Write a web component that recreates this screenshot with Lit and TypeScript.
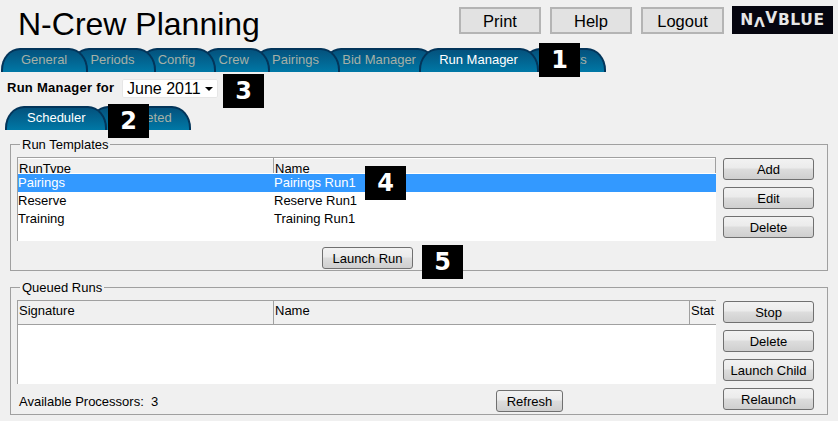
import { LitElement, html, css } from "lit";
import { customElement } from "lit/decorators.js";

const mainTabs = ["General", "Periods", "Config", "Crew", "Pairings", "Bid Manager", "Run Manager", "Reports"];

@customElement("app-root")
export class AppRoot extends LitElement {
  static styles = css`
    :host {
      display: block;
      position: relative;
      width: 838px;
      height: 421px;
      overflow: hidden;
      background: #f0f0f0;
      color: #000;
      font: 13px/16px "Liberation Sans", Arial, sans-serif;
    }
    .top { display: flex; height: 48px; box-sizing: border-box; padding: 6px 5px 0 18px; }
    .title { margin: 0; font-size: 32px; line-height: 36px; font-weight: 400; }
    .actions { margin-left: auto; display: flex; gap: 9px; align-items: flex-start; }
    .hbtn {
      box-sizing: border-box; width: 82px; height: 27px; margin-top: 1px; padding: 0;
      border: 2px solid #b4b4b4; background: #e2e2e2; color: #000;
      font: 16.5px/22px "Liberation Sans", Arial, sans-serif;
    }
    .hbtn.wide { width: 83px; }
    .logo {
      box-sizing: border-box; width: 101px; height: 28px; margin-left: -1px; background: #05050f; color: #e6e6e6;
      display: flex; align-items: center; justify-content: center; letter-spacing: .6px;
      font: 700 15.5px/28px "DejaVu Sans", sans-serif;
    }
    .logo .up { position: relative; top: -2px; }
    .logo .dn { position: relative; top: 2px; font-size: 14px; }
    .tabs { display: flex; height: 24px; padding-left: 1px; }
    .tabs.sub { padding-left: 5px; }
    .tab {
      position: relative;
      box-sizing: border-box; height: 24px; padding: 0 19px 0 18px; margin-right: -17.8px;
      border: 2px solid #03355a; border-bottom: 0; border-radius: 19px 19px 0 0 / 22px 22px 0 0;
      background: linear-gradient(#04527d, #0078a6);
      color: #a6b0a6; line-height: 20px; white-space: nowrap;
    }
    .tab:last-child { padding-right: 17px; }
    .sub .tab.first { padding-left: 20px; }
    .tab.on { color: #fff; }
    .tabs .tab:nth-child(1) { z-index: 8; }
    .tabs .tab:nth-child(2) { z-index: 7; }
    .tabs .tab:nth-child(3) { z-index: 6; }
    .tabs .tab:nth-child(4) { z-index: 5; }
    .tabs .tab:nth-child(5) { z-index: 4; }
    .tabs .tab:nth-child(6) { z-index: 3; }
    .tabs .tab:nth-child(7) { z-index: 9; }
    .forrow { display: flex; align-items: center; height: 34px; padding: 0 0 0 7px; box-sizing: border-box; }
    .forrow b { letter-spacing: .27px; width: 115px; position: relative; top: -1px; }
    .sel {
      box-sizing: border-box; width: 96px; height: 19px; margin-top: -1px; padding-left: 5px;
      background: #fff; border-radius: 2px; box-shadow: 0 0 0 1px #e6e6e6 inset;
      display: flex; align-items: center; justify-content: space-between;
      font-size: 16px; line-height: 19px;
    }
    .sel i { width: 0; height: 0; margin-right: 5px; border: 4px solid transparent; border-top-color: #000; border-bottom: 0; }
    fieldset {
      margin: 6px 0 0 10px; padding: 5px 13px 0 6px; width: 818px; box-sizing: border-box;
      border: 1px solid #a0a0a0;
      display: grid; grid-template-columns: 699px 91px; column-gap: 7px; grid-template-rows: 84px auto; align-content: start;
    }
    fieldset.one { height: 135px; }
    fieldset.two { height: 136px; margin-top: 8px; }
    legend { margin-left: 3px; padding: 0 2px; line-height: 16px; }
    legend span { position: relative; top: 1px; }
    .table { background: #fff; position: relative; overflow: hidden; box-sizing: border-box; border-left: 1px solid #a0a0a0; }
    .head { display: grid; background: #f0f0f0; box-sizing: border-box; overflow: hidden; }
    .one .head { height: 17px; grid-template-columns: 256px 1fr; border-top: 1px solid #a0a0a0; border-bottom: 1px solid #fff; box-shadow: inset 0 1px 0 #fff; }
    .two .head { height: 25px; grid-template-columns: 256px 416px 1fr; border-top: 1px solid #a0a0a0; border-bottom: 1px solid #a0a0a0; }
    .head span { padding: 3px 0 0 1px; border-right: 1px solid #a0a0a0; white-space: nowrap; overflow: hidden; }
    .two .head span { padding-top: 1px; line-height: 18px; }
    .head span:last-child { border-right: 0; }
    .one .head span:last-child { border-right: 1px solid #a0a0a0; }
    .row { display: grid; grid-template-columns: 256px 1fr; height: 18px; line-height: 18px; }
    .row.on { background: #3399ff; color: #fff; }
    .side { grid-column: 2; grid-row: 1 / span 2; display: flex; flex-direction: column; gap: 7px; padding-top: 1px; }
    .btn {
      box-sizing: border-box; height: 22px; padding: 1px 0 0; width: 91px;
      border: 1px solid #707070; border-radius: 3px; color: #000;
      background: linear-gradient(#f2f2f2 0, #ebebeb 45%, #dddddd 50%, #cfcfcf 100%);
      font: 13px/18px "Liberation Sans", Arial, sans-serif;
    }
    .foot { display: flex; padding-top: 6px; align-items: flex-start; }
    .foot.center { justify-content: center; padding-left: 2px; }
    .foot .avail { padding: 4px 0 0 2px; }
    .foot .refresh { width: 67px; margin: 0 153px 0 auto; }
    .badge {
      position: absolute; width: 41px; height: 34px; background: #000; color: #fff; z-index: 20;
      display: flex; align-items: center; justify-content: center;
      font: 700 24px/34px "DejaVu Sans", sans-serif;
    }
    .b1 { left: 539px; top: 43px; }
    .b2 { left: 108px; top: 104px; }
    .b3 { left: 223px; top: 74px; }
    .b4 { left: 365px; top: 166px; }
    .b5 { left: 422px; top: 245px; }
  `;

  render() {
    return html`
      <div class="top">
        <h1 class="title">N-Crew Planning</h1>
        <div class="actions">
          <button class="hbtn">Print</button>
          <button class="hbtn">Help</button>
          <button class="hbtn wide">Logout</button>
          <div class="logo">N<span class="dn">Λ</span><span class="up">V</span>BLUE</div>
        </div>
      </div>
      <div class="tabs">
        ${mainTabs.map((t) => html`<div class="tab ${t === "Run Manager" ? "on" : ""}">${t}</div>`)}
      </div>
      <div class="forrow">
        <b>Run Manager for</b>
        <div class="sel">June 2011<i></i></div>
      </div>
      <div class="tabs sub">
        <div class="tab first on">Scheduler</div>
        <div class="tab">Completed</div>
      </div>
      <fieldset class="one">
        <legend><span>Run Templates</span></legend>
        <div class="table">
          <div class="head"><span>RunType</span><span>Name</span></div>
          <div class="row on"><div>Pairings</div><div>Pairings Run1</div></div>
          <div class="row"><div>Reserve</div><div>Reserve Run1</div></div>
          <div class="row"><div>Training</div><div>Training Run1</div></div>
        </div>
        <div class="side">
          <button class="btn">Add</button>
          <button class="btn">Edit</button>
          <button class="btn">Delete</button>
        </div>
        <div class="foot center"><button class="btn">Launch Run</button></div>
      </fieldset>
      <fieldset class="two">
        <legend><span>Queued Runs</span></legend>
        <div class="table">
          <div class="head"><span>Signature</span><span>Name</span><span>Stat</span></div>
        </div>
        <div class="side">
          <button class="btn">Stop</button>
          <button class="btn">Delete</button>
          <button class="btn">Launch Child</button>
          <button class="btn">Relaunch</button>
        </div>
        <div class="foot">
          <span class="avail">Available Processors:&nbsp; 3</span>
          <button class="btn refresh">Refresh</button>
        </div>
      </fieldset>
      <div class="badge b1">1</div>
      <div class="badge b2">2</div>
      <div class="badge b3">3</div>
      <div class="badge b4">4</div>
      <div class="badge b5">5</div>
    `;
  }
}
